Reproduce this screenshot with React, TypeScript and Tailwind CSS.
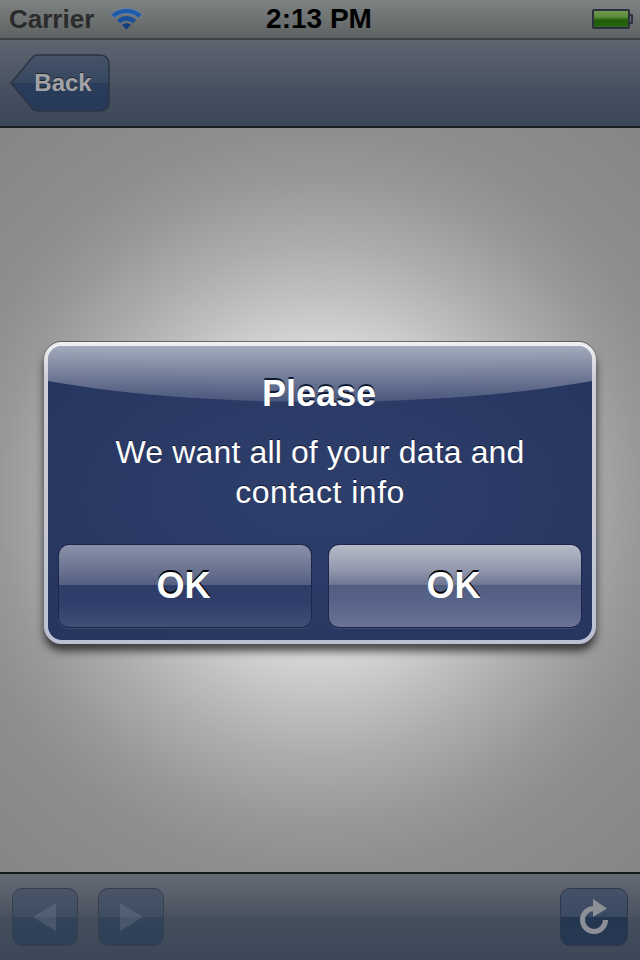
export default function App() {
  return (
    <div className="relative flex h-[960px] w-[640px] flex-col overflow-hidden bg-[#8c8c8c] font-['Liberation_Sans',Arial,sans-serif]">
      {/* Status bar */}
      <div className="grid h-[40px] shrink-0 grid-cols-3 items-center border-b-2 border-[#3f4144] bg-[linear-gradient(#7d8282,#5e6262)] pl-[9px] pr-[7px]">
        <div className="flex items-center gap-[16px]">
          <span className="text-[26px] font-bold leading-none text-[#2b2b2b]">Carrier</span>
          <svg width="33" height="24" viewBox="0 0 33 24" className="mt-[-3px]">
            <path d="M1 8.5C9.5 .5 23.5 .5 32 8.5L28.5 12C22 6 11 6 4.5 12Z" fill="#1f5aa8" stroke="#6a8fc0" strokeWidth="0.6" />
            <path d="M6.8 14C12.5 8.8 20.5 8.8 26.2 14L22.8 17.2C19 13.8 14 13.8 10.2 17.2Z" fill="#1a4f99" />
            <path d="M12 19C14.8 16.6 18.2 16.6 21 19L16.5 23.5Z" fill="#123f80" />
          </svg>
        </div>
        <div className="mr-[4px] text-center text-[28px] font-bold leading-none text-black">2:13 PM</div>
        <div className="flex items-center justify-end">
          <div className="h-[20px] w-[38px] rounded-[2px] border-2 border-[#2c3040] bg-[linear-gradient(#6f9a50_0%,#5d8a3e_35%,#1f5a08_60%,#2a6410_100%)]" />
          <div className="h-[10px] w-[3px] rounded-r-[2px] border-2 border-l-0 border-[#2c3040]" />
        </div>
      </div>

      {/* Nav bar */}
      <div className="flex h-[88px] shrink-0 items-center border-b-2 border-[#1b1c1e] bg-[linear-gradient(#5d6470,#4b5462_50%,#475162_50%,#3b4758)] pl-[10px]">
        <button className="relative flex h-[58px] w-[100px] items-center justify-center pl-[6px]">
          <svg width="100" height="58" viewBox="0 0 100 58" className="absolute inset-0">
            <defs>
              <linearGradient id="backFill" x1="0" y1="0" x2="0" y2="1">
                <stop offset="0" stopColor="#465369" />
                <stop offset="0.5" stopColor="#364760" />
                <stop offset="0.5" stopColor="#2a3d5c" />
                <stop offset="1" stopColor="#263a58" />
              </linearGradient>
            </defs>
            <path
              d="M1 29L23 2.5Q25 1 28 1H89Q99 1 99 11V47Q99 57 89 57H28Q25 57 23 55.5Z"
              fill="url(#backFill)"
              stroke="#2b3442"
              strokeWidth="1.5"
            />
          </svg>
          <span className="relative text-[24px] font-bold leading-none text-[#a2a4a8] [text-shadow:0_-1px_0_#222]">
            Back
          </span>
        </button>
      </div>

      {/* Page with the alert */}
      <div className="flex flex-1 items-center justify-center bg-[radial-gradient(circle_500px_at_50%_50%,#e2e2e2_0px,#d5d5d5_157px,#c0c0c0_205px,#adadad_255px,#989898_322px,#8e8e8e_372px,#858585_500px)] pb-[14px]">
        <div className="h-[302px] w-[552px] rounded-[18px] bg-[linear-gradient(#f0f1f3,#cdd0d8_12%,#c6c9d4_60%,#bcc0d0)] p-[4px] shadow-[0_-1px_0_rgba(70,70,70,0.7),0_7px_9px_rgba(0,0,0,0.65)]">
          <div className="relative h-full overflow-hidden rounded-[14px] bg-[radial-gradient(ellipse_at_center,#2f3f6c,#26355f)]">
            <div className="absolute left-[-128px] top-[-102px] h-[158px] w-[800px] rounded-[50%] bg-[linear-gradient(transparent_102px,rgba(255,255,255,0.58)_102px,rgba(255,255,255,0.14)_158px)]" />
            <div className="relative flex h-full flex-col items-center pt-[27px]">
              <div className="mr-[2px] text-[36px] font-bold leading-[42px] text-white [text-shadow:0_-2px_0_#111a33]">Please</div>
              <div className="mt-[17px] text-center text-[32px] leading-[40px] text-white [text-shadow:0_-1px_0_#111a33]">
                <span className="tracking-[0.14px]">We want all of your data and</span>
                <br />
                <span className="tracking-[0.5px]">contact info</span>
              </div>
              <div className="mt-[33px] flex w-full gap-[18px] px-[11px]">
                <AlertButton tone="bg-[linear-gradient(#8b91a9,#6a7391_30%,#545f82_49%,#2d3c68_49%,#2f3e6a_70%,#414e76)]" />
                <AlertButton tone="bg-[linear-gradient(#b7bbc9,#9298ad_30%,#6d7592_49%,#525e80_49%,#57638a_70%,#6a7392)]" />
              </div>
            </div>
          </div>
        </div>
      </div>

      {/* Toolbar */}
      <div className="flex h-[88px] shrink-0 items-center gap-[20px] border-t-2 border-[#17181a] bg-[linear-gradient(#646b75,#4b525f_50%,#454f5e_50%,#3b4757)] pl-[12px] pr-[12px]">
        <ToolButton>
          <svg width="24" height="28" viewBox="0 0 24 28">
            <path d="M0 14L23 0V28Z" fill="#98a2b0" fillOpacity="0.22" />
          </svg>
        </ToolButton>
        <ToolButton>
          <svg width="24" height="28" viewBox="0 0 24 28">
            <path d="M1 0L24 14L1 28Z" fill="#98a2b0" fillOpacity="0.22" />
          </svg>
        </ToolButton>
        <div className="ml-auto flex h-[58px] w-[68px] items-center justify-center rounded-[10px] border border-[#2d3747] bg-[linear-gradient(#435269,#3a4961_50%,#253650_50%,#263853)]">
          <svg width="30" height="38" viewBox="0 0 30 38">
            <path d="M26.5 22A11.5 11.5 0 1 1 15 10.5" fill="none" stroke="#8d9096" strokeWidth="5" />
            <path d="M14 1L28 10.5L14 19Z" fill="#8d9096" />
          </svg>
        </div>
      </div>
    </div>
  )
}

function AlertButton({ tone }: { tone: string }) {
  return (
    <button
      className={`h-[82px] flex-1 rounded-[10px] pr-[3px] text-[36px] font-bold leading-none text-white shadow-[0_0_0_1px_#1b2748,0_1px_0_1px_#3d4a70] [text-shadow:0_-2px_0_#000] ${tone}`}
    >
      OK
    </button>
  )
}

function ToolButton({ children }: { children: React.ReactNode }) {
  return (
    <div className="flex h-[58px] w-[66px] items-center justify-center rounded-[10px] border border-[#353e4c] bg-[linear-gradient(#4a5567,#3f4c61_50%,#334359_50%,#2f3f57)]">
      {children}
    </div>
  )
}
